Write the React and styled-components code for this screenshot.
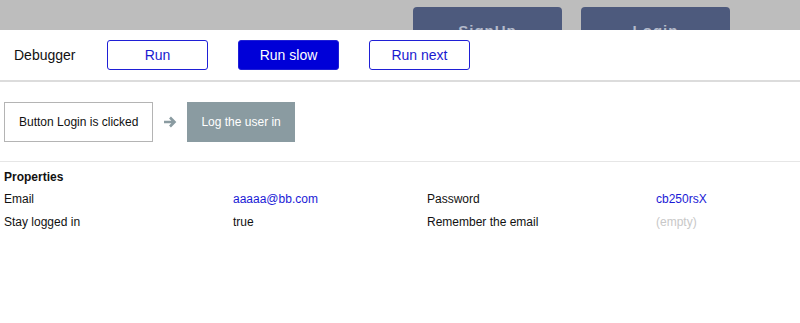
import React from 'react';
import styled, { createGlobalStyle } from 'styled-components';

const GlobalStyle = createGlobalStyle`
  html, body {
    margin: 0;
    padding: 0;
    background: #fff;
    font-family: "Liberation Sans", Arial, sans-serif;
  }
`;

const Backdrop = styled.div`
  height: 30px;
  overflow: hidden;
  background: #bdbdbd;
  display: flex;
  padding: 7px 0 0 413px;
  gap: 19px;
  box-sizing: border-box;
`;

const PageButton = styled.div`
  flex: none;
  width: 149px;
  height: 44px;
  border-radius: 4px;
  background: #4d5a7d;
  color: #b4bacb;
  font-size: 15px;
  font-weight: bold;
  letter-spacing: 1px;
  display: flex;
  align-items: center;
  justify-content: center;
  padding-top: 2px;
  box-sizing: border-box;
`;

const Toolbar = styled.div`
  height: 50px;
  display: flex;
  align-items: center;
  padding-left: 14px;
  border-bottom: 2px solid #dcdcdc;
  font-family: "Liberation Sans", Arial, sans-serif;
  font-size: 14px;
  color: #111;
`;

const ToolLabel = styled.span`
  width: 93px;
`;

const ToolButton = styled.button`
  width: 101px;
  height: 30px;
  margin-right: 30px;
  border: 1px solid #1f1fd6;
  border-radius: 3px;
  background: ${p => (p.active ? '#0000d8' : '#fff')};
  color: ${p => (p.active ? '#fff' : '#1a1ad0')};
  font-family: inherit;
  font-size: 14px;
  padding: 0;
`;

const Flow = styled.div`
  height: 79px;
  display: flex;
  align-items: center;
  padding: 0 4px;
  border-bottom: 1px solid #e6e6e6;
  font-size: 12px;
`;

const Step = styled.div`
  height: 40px;
  box-sizing: border-box;
  padding: 0 ${p => (p.done ? 13 : 14)}px;
  display: flex;
  align-items: center;
  border: 1px solid ${p => (p.done ? '#8a9ba1' : '#b4b4b4')};
  background: ${p => (p.done ? '#8a9ba1' : '#fff')};
  color: ${p => (p.done ? '#fff' : '#111')};
`;

const Arrow = styled.svg`
  width: 14px;
  height: 14px;
  margin: 0 10px;
`;

const Props = styled.div`
  padding: 8px 4px 0;
  font-size: 12px;
  color: #111;
`;

const Heading = styled.div`
  font-weight: bold;
  height: 15px;
  line-height: 15px;
  margin-bottom: 7px;
`;

const Grid = styled.div`
  display: grid;
  grid-template-columns: 229px 194px 229px auto;
  row-gap: 8px;
  line-height: 15px;
`;

const Value = styled.span`
  color: ${p => (p.link ? '#1a1ad6' : p.empty ? '#c8c8c8' : '#111')};
`;

export default function App() {
  return (
    <>
      <GlobalStyle />
      <Backdrop>
        <PageButton>SignUp</PageButton>
        <PageButton>Login</PageButton>
      </Backdrop>
      <Toolbar>
        <ToolLabel>Debugger</ToolLabel>
        <ToolButton>Run</ToolButton>
        <ToolButton active>Run slow</ToolButton>
        <ToolButton>Run next</ToolButton>
      </Toolbar>
      <Flow>
        <Step>Button Login is clicked</Step>
        <Arrow viewBox="0 0 14 14">
          <path d="M1 7h10M7 2.5L11.5 7 7 11.5" fill="none" stroke="#8a9ba1" strokeWidth="2.6" />
        </Arrow>
        <Step done>Log the user in</Step>
      </Flow>
      <Props>
        <Heading>Properties</Heading>
        <Grid>
          <span>Email</span>
          <Value link>aaaaa@bb.com</Value>
          <span>Password</span>
          <Value link>cb250rsX</Value>
          <span>Stay logged in</span>
          <Value>true</Value>
          <span>Remember the email</span>
          <Value empty>(empty)</Value>
        </Grid>
      </Props>
    </>
  );
}
